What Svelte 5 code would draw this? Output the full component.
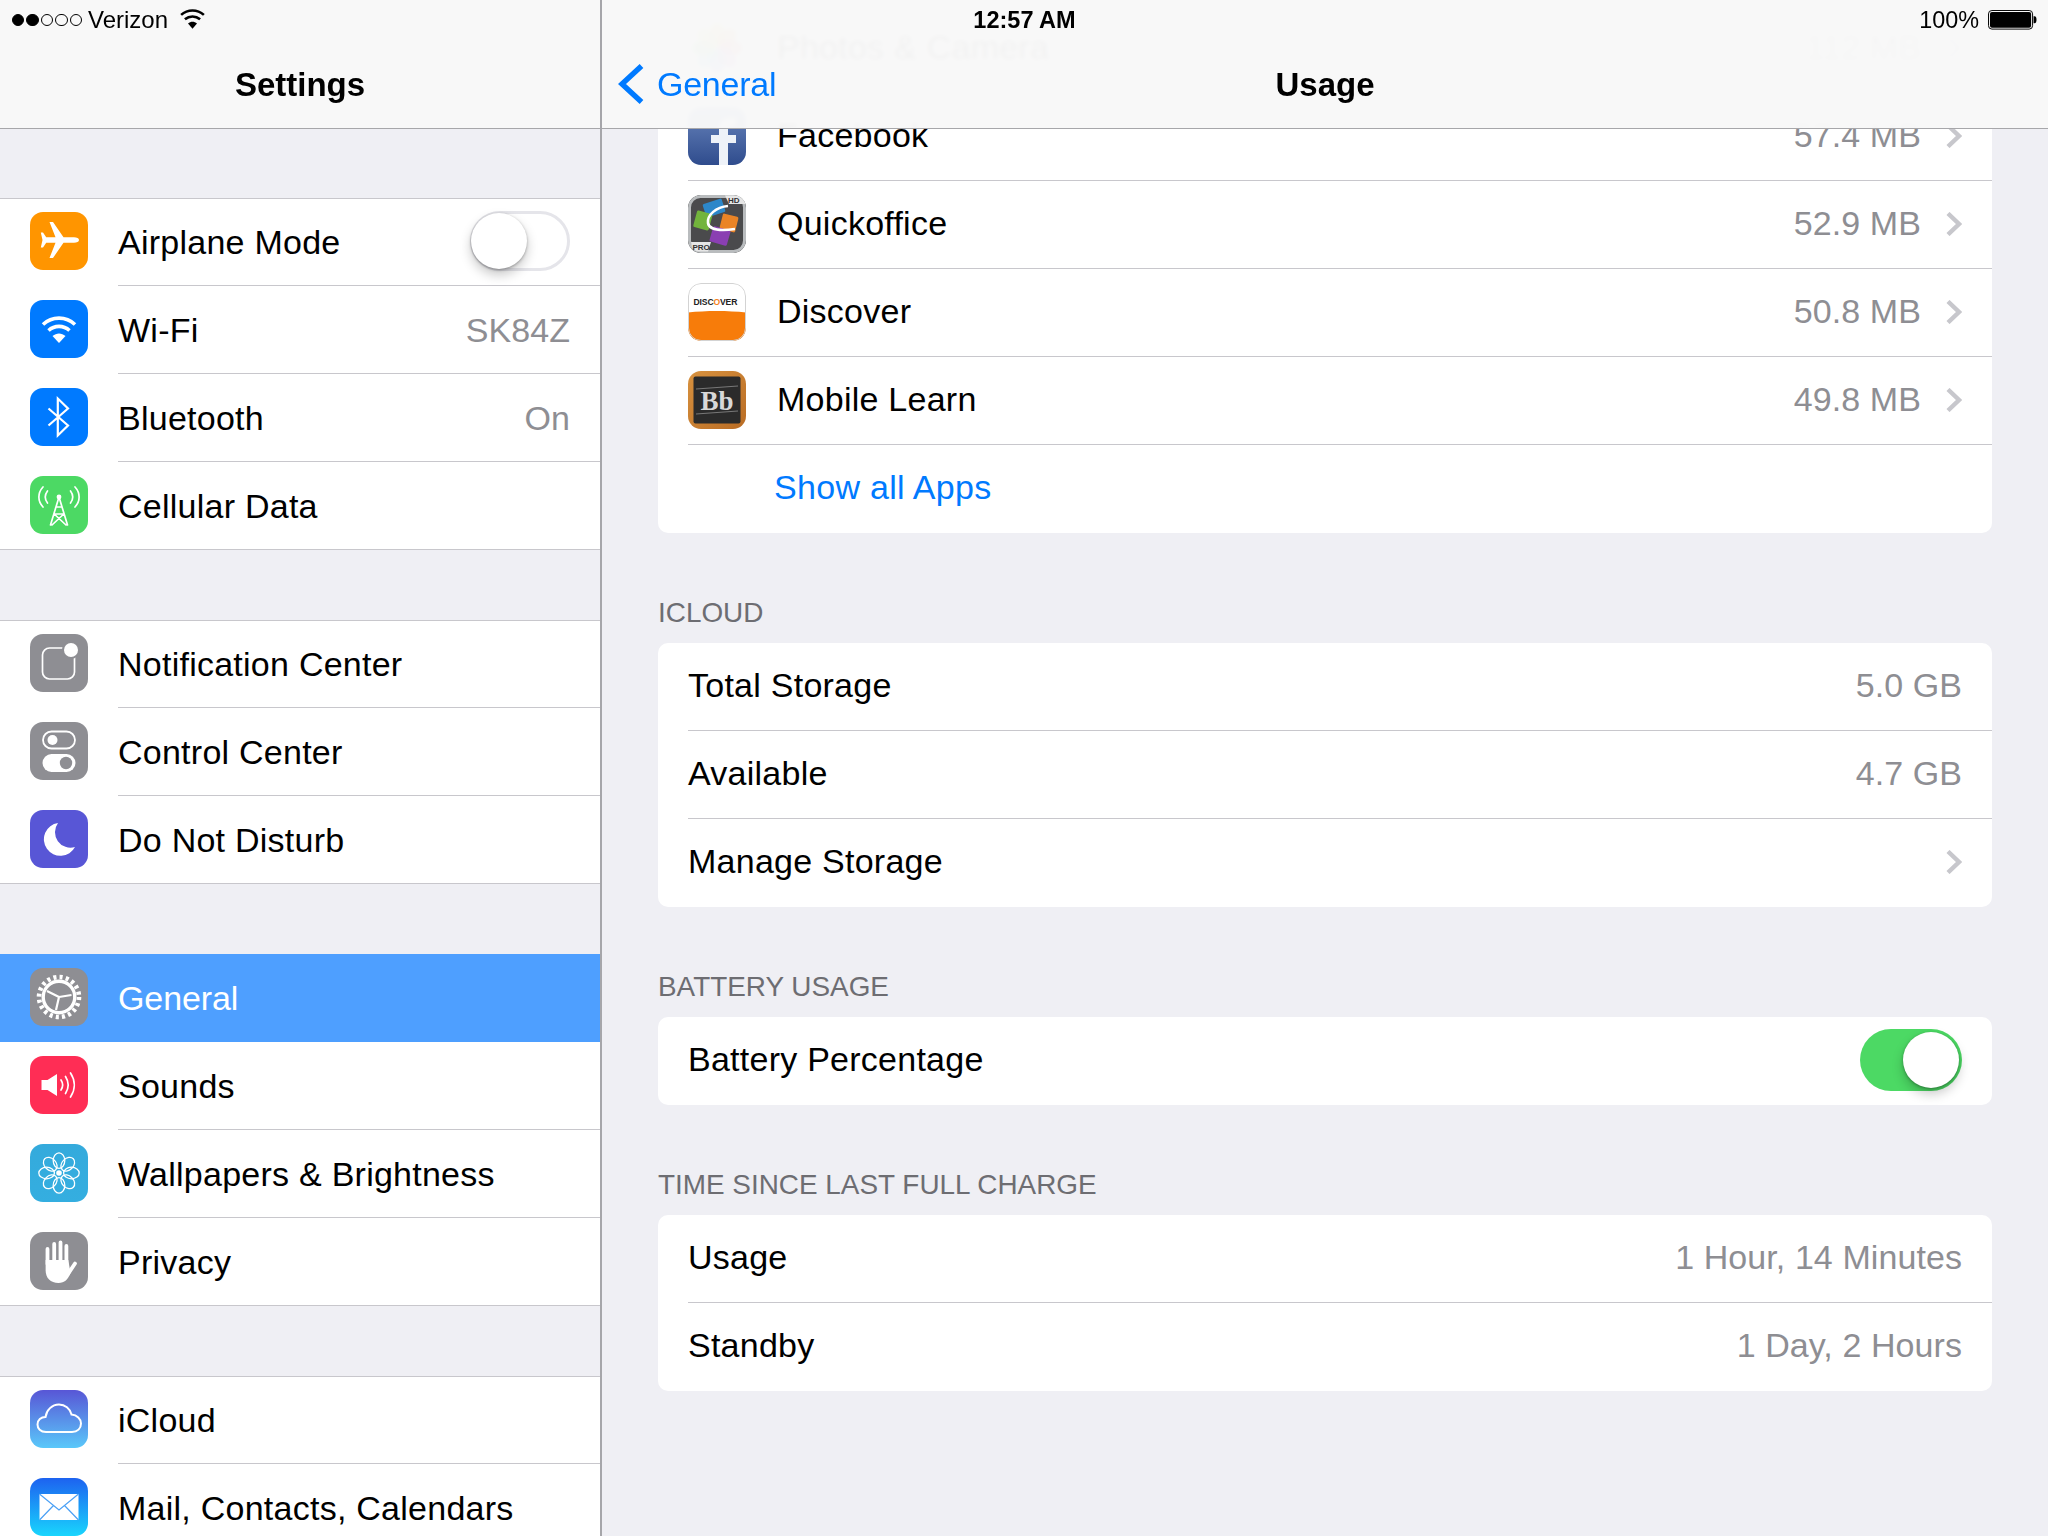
<script>
  const groups = [
    [
      { k: 'plane', bg: 'orange', label: 'Airplane Mode', toggle: 'off' },
      { k: 'wifi', bg: 'blue', label: 'Wi-Fi', value: 'SK84Z' },
      { k: 'bt', bg: 'blue', label: 'Bluetooth', value: 'On' },
      { k: 'cell', bg: 'green', label: 'Cellular Data' }
    ],
    [
      { k: 'notif', bg: 'gray', label: 'Notification Center' },
      { k: 'control', bg: 'gray', label: 'Control Center' },
      { k: 'moon', bg: 'indigo', label: 'Do Not Disturb' }
    ],
    [
      { k: 'gear', bg: 'gray', label: 'General', selected: true },
      { k: 'sound', bg: 'pink', label: 'Sounds' },
      { k: 'flower', bg: 'teal', label: 'Wallpapers & Brightness' },
      { k: 'hand', bg: 'gray', label: 'Privacy' }
    ],
    [
      { k: 'cloud', bg: 'cloudbg', label: 'iCloud' },
      { k: 'mail', bg: 'mailbg', label: 'Mail, Contacts, Calendars' }
    ]
  ];
  const apps = [
    { k: 'photos', label: 'Photos & Camera', value: '112 MB' },
    { k: 'facebook', label: 'Facebook', value: '57.4 MB' },
    { k: 'quick', label: 'Quickoffice', value: '52.9 MB' },
    { k: 'discover', label: 'Discover', value: '50.8 MB' },
    { k: 'bb', label: 'Mobile Learn', value: '49.8 MB' }
  ];
  const petals = [0, 45, 90, 135, 180, 225, 270, 315];
  const photoColors = ['#f5c33b', '#f28b2c', '#e8504c', '#b45fc0', '#6a7fd8', '#4fb6e0', '#6cc96a', '#b9d84a'];
</script>

{#snippet chevron()}
  <svg class="chev" viewBox="0 0 16 24" aria-hidden="true"><path d="M2 1.5 L13 12 L2 22.5" fill="none" stroke="#c7c7cc" stroke-width="4.4" /></svg>
{/snippet}

{#snippet toggle(state)}
  <span class="switch {state}"><span class="knob"></span></span>
{/snippet}

{#snippet glyph(k)}
  {#if k === 'plane'}
    <path fill="#fff" d="M49 28 C49 26.3 46.8 25.3 44 25.3 H33.5 L23 10 H19.5 L25.5 25.3 H16.2 L13 20.5 H10.8 L12.5 28 L10.8 35.5 H13 L16.2 30.7 H25.5 L19.5 46 H23 L33.5 30.7 H44 C46.8 30.7 49 29.7 49 28 Z" />
  {:else if k === 'wifi'}
    <path d="M29 43 L22.5 36 C26.5 32.6 31.5 32.6 35.5 36 Z" fill="#fff" />
    <path d="M18.5 30.5 C24.5 25 33.5 25 39.5 30.5" fill="none" stroke="#fff" stroke-width="3.6" />
    <path d="M13 24.5 C22 16 36 16 45 24.5" fill="none" stroke="#fff" stroke-width="3.6" />
  {:else if k === 'bt'}
    <path d="M18.5 20.5 L38 37.5 L27.8 47.5 V10.5 L38 20.5 L18.5 37.5" fill="none" stroke="#fff" stroke-width="2.2" />
  {:else if k === 'cell'}
    <g fill="none" stroke="#fff" stroke-width="1.7" stroke-linecap="round">
      <path d="M29 21 L20.5 49 M29 21 L37.5 49 M26.2 31 H31.8 M24.2 38 L36 49 M33.8 38 L22 49 M24.2 38 H33.8" />
      <path d="M13 11 C7.5 17 7.5 25 13 31 M17.5 15 C14.5 19 14.5 23 17.5 27 M45 11 C50.5 17 50.5 25 45 31 M40.5 15 C43.5 19 43.5 23 40.5 27" />
    </g>
    <circle cx="29" cy="21" r="2.4" fill="#fff" />
  {:else if k === 'notif'}
    <rect x="12.5" y="14" width="32" height="31" rx="7" fill="none" stroke="#fff" stroke-width="1.7" />
    <circle cx="41" cy="16" r="9" fill="#8e8e93" />
    <circle cx="41" cy="16" r="7" fill="#fff" />
  {:else if k === 'control'}
    <rect x="13" y="9.5" width="32" height="17" rx="8.5" fill="none" stroke="#fff" stroke-width="1.8" />
    <circle cx="22.5" cy="18" r="5" fill="#fff" />
    <rect x="12.5" y="32" width="33" height="18" rx="9" fill="#fff" />
    <circle cx="36" cy="41" r="6.2" fill="#8e8e93" />
  {:else if k === 'moon'}
    <path fill="#fff" d="M28 13 A16.5 16.5 0 1 0 45 37 A15.5 15.5 0 0 1 28 13 Z" />
  {:else if k === 'gear'}
    <circle cx="29" cy="29" r="20" fill="none" stroke="#fff" stroke-width="4.6" stroke-dasharray="3.1 3.18" />
    <circle cx="29" cy="29" r="15.8" fill="none" stroke="#fff" stroke-width="3.4" />
    <path d="M29 29 L17 23 M29 29 L41.5 27 M29 29 L26 42" fill="none" stroke="#fff" stroke-width="2.2" />
  {:else if k === 'sound'}
    <path fill="#fff" d="M11.5 24 H17.5 L27 18 V40 L17.5 34 H11.5 Z" />
    <g fill="none" stroke="#fff" stroke-width="1.7" stroke-linecap="round">
      <path d="M31 24 C33 27 33 31 31 34 M35.5 20.5 C39 26 39 32 35.5 37.5 M40.5 17 C45.5 24.5 45.5 33.5 40.5 41" />
    </g>
  {:else if k === 'flower'}
    <g fill="none" stroke="#fff" stroke-width="1.3">
      {#each petals as a}
        <ellipse cx="29" cy="16.6" rx="5.8" ry="7.8" transform="rotate({a} 29 29)" />
      {/each}
    </g>
    <circle cx="29" cy="29" r="2.8" fill="#fff" />
  {:else if k === 'hand'}
    <g fill="none" stroke="#fff" stroke-width="3.8" stroke-linecap="round">
      <path d="M17.5 17 V32 M24.2 12 V30 M30.5 10.5 V30 M36.4 14 V32 M38 42 L45 31.5" />
    </g>
    <path fill="#fff" d="M15.6 28 H38.3 L40.5 41 C38 47.5 34.5 51 28.5 51 C20.5 51 15.6 46 15.6 38 Z" />
  {:else if k === 'cloud'}
    <path fill="none" stroke="#fff" stroke-width="2" d="M16 42 C10.5 42 7.5 38.5 7.5 34.5 C7.5 30 11 27 15.5 27 C16.5 20 22 14.5 29 14.5 C35 14.5 40 18.5 41.5 24.5 C47 25 51 29 51 33.5 C51 38.5 47.5 42 42 42 Z" />
  {:else if k === 'mail'}
    <rect x="9.5" y="16" width="39" height="26" fill="#fff" />
    <path d="M9.5 16 L29 32 L48.5 16 M9.5 42 L23.5 27.5 M48.5 42 L34.5 27.5" fill="none" stroke="#4aa0f5" stroke-width="1.2" />
  {:else if k === 'photos'}
    {#each petals as a, i}
      <ellipse cx="29" cy="16" rx="8" ry="12" fill={photoColors[i]} opacity="0.8" transform="rotate({a} 29 29)" />
    {/each}
  {:else if k === 'facebook'}
    <path fill="#eef2f8" d="M31 58 V36 H23 V28 H31 V21 C31 14 36 11 42 11 H48 V19 H44 C41 19 40 20 40 23 V28 H48 V36 H40 V58 Z" />
  {:else if k === 'quick'}
    <rect x="1.5" y="1.5" width="55" height="55" rx="11" fill="none" stroke="#b9bcbe" stroke-width="3" />
    <path d="M37 0.5 H47 C53 0.5 56 3 57.5 9 H41 Z" fill="#e6e6e6" />
    <text x="40" y="8" class="tiny">HD</text>
    <path d="M3 47 H23 L20 56.5 H11 C6 56.5 3.5 53 3 47 Z" fill="#e6e6e6" />
    <text x="4.5" y="55" class="tiny">PRO</text>
    <rect x="16" y="6" width="20" height="14" rx="1.5" fill="#2c87c9" transform="rotate(-18 26 13)" />
    <rect x="7" y="17" width="16" height="17" rx="1.5" fill="#72b43c" transform="rotate(15 15 25)" />
    <rect x="33" y="20" width="16" height="16" rx="1.5" fill="#ea8426" transform="rotate(14 41 28)" />
    <rect x="23" y="33" width="18" height="16" rx="1.5" fill="#8a3fb2" transform="rotate(16 32 41)" />
    <path d="M40 11 C28 12 19 20 20 28 C21 35 32 36 47 34" fill="none" stroke="#fff" stroke-width="2.6" />
  {:else if k === 'discover'}
    <path d="M0 29.5 C18 27.5 40 27.5 58 29.5 V45 C58 53 53 58 45 58 H13 C5 58 0 53 0 45 Z" fill="#f77c0a" />
    <rect x="0.5" y="0.5" width="57" height="57" rx="12.5" fill="none" stroke="#d3d3d3" />
    <text x="5.5" y="22" class="disc">DISC<tspan fill="#f58220">O</tspan>VER</text>
  {:else if k === 'bb'}
    <rect x="5.5" y="5.5" width="47" height="47" rx="2" fill="#2b2b2b" />
    <path d="M8 18 L50 15 M8 43 L50 40" stroke="#8c8c8c" stroke-width="0.8" />
    <text x="29" y="39" text-anchor="middle" class="bbtext">Bb</text>
  {/if}
{/snippet}

{#snippet icon(k, bg)}
  <svg class="icon {bg}" viewBox="0 0 58 58" aria-hidden="true">{@render glyph(k)}</svg>
{/snippet}

<div class="screen">
  <aside class="master">
    <header class="nav"><h1>Settings</h1></header>
    {#each groups as g}
      <section class="group">
        {#each g as r}
          <div class="row" class:selected={r.selected}>
            {@render icon(r.k, r.bg)}
            <div class="cell">
              <span class="label">{r.label}</span>
              {#if r.value}<span class="value">{r.value}</span>{/if}
              {#if r.toggle}{@render toggle(r.toggle)}{/if}
            </div>
          </div>
        {/each}
      </section>
    {/each}
  </aside>

  <main class="detail">
    <header class="nav">
      <a class="back">
        <svg class="back-chev" viewBox="0 0 26 40" aria-hidden="true"><path d="M23.5 2 L4 20 L23.5 38" fill="none" stroke="#007aff" stroke-width="5.4" /></svg>
        <span>General</span>
      </a>
      <h1>Usage</h1>
    </header>

    <div class="content">
      <section class="card">
        {#each apps as a}
          <div class="crow">
            {@render icon(a.k, a.k)}
            <div class="ccell">
              <span class="label">{a.label}</span>
              <span class="value">{a.value}</span>
              {@render chevron()}
            </div>
          </div>
        {/each}
        <div class="crow"><span class="showall">Show all Apps</span></div>
      </section>

      <h2>iCloud</h2>
      <section class="card">
        <div class="crow"><div class="ccell"><span class="label">Total Storage</span><span class="value">5.0 GB</span></div></div>
        <div class="crow"><div class="ccell"><span class="label">Available</span><span class="value">4.7 GB</span></div></div>
        <div class="crow"><div class="ccell"><span class="label">Manage Storage</span>{@render chevron()}</div></div>
      </section>

      <h2>Battery Usage</h2>
      <section class="card">
        <div class="crow"><div class="ccell"><span class="label">Battery Percentage</span>{@render toggle('on')}</div></div>
      </section>

      <h2>Time Since Last Full Charge</h2>
      <section class="card">
        <div class="crow"><div class="ccell"><span class="label">Usage</span><span class="value">1 Hour, 14 Minutes</span></div></div>
        <div class="crow"><div class="ccell"><span class="label">Standby</span><span class="value">1 Day, 2 Hours</span></div></div>
      </section>
    </div>
  </main>

  <div class="status">
    <div class="st-left">
      <span class="dots"><i class="on"></i><i class="on"></i><i></i><i></i><i></i></span>
      <span>Verizon</span>
      <svg class="st-wifi" viewBox="11 15 36 29" aria-hidden="true">
        <path d="M29 43.5 L22.5 36 C26.5 32.6 31.5 32.6 35.5 36 Z" fill="#000" />
        <path d="M18 30 C24.5 24.5 33.5 24.5 40 30" fill="none" stroke="#000" stroke-width="3.8" />
        <path d="M12.5 23.5 C22 15 36 15 45.5 23.5" fill="none" stroke="#000" stroke-width="3.8" />
      </svg>
    </div>
    <div class="st-time">12:57 AM</div>
    <div class="st-right">
      <span class="pct">100%</span>
      <svg class="battery" viewBox="0 0 50 20" aria-hidden="true">
        <rect x="0.5" y="0.5" width="45" height="19" rx="3.5" fill="none" stroke="#000" />
        <rect x="2" y="2" width="42" height="16" rx="2" fill="#000" />
        <path d="M46.5 6.5 H47.5 C49 6.5 49.5 8 49.5 10 C49.5 12 49 13.5 47.5 13.5 H46.5 Z" fill="#000" />
      </svg>
    </div>
  </div>
</div>

<style>
  :global(body) { margin: 0; background: #efeff4; }
  .screen {
    position: relative;
    display: flex;
    width: 2048px;
    height: 1536px;
    overflow: hidden;
    background: #efeff4;
    color: #000;
    font-family: "Liberation Sans", Arial, sans-serif;
    font-size: 34px;
  }
  .master {
    position: relative;
    box-sizing: border-box;
    flex: 0 0 602px;
    height: 1536px;
    padding-top: 128px;
    overflow: hidden;
    border-right: 2px solid #a6a6aa;
  }
  .detail {
    position: relative;
    flex: 1;
    height: 1536px;
    overflow: hidden;
  }
  .nav {
    position: absolute;
    top: 0;
    left: 0;
    right: 0;
    z-index: 2;
    box-sizing: border-box;
    height: 129px;
    border-bottom: 1px solid #a7a7aa;
    background: rgba(248, 248, 248, 0.975);
    backdrop-filter: blur(2px);
    display: flex;
    align-items: center;
    justify-content: center;
    padding-top: 41px;
  }
  h1 {
    margin: 0;
    font-size: 33px;
    font-weight: 700;
    line-height: 40px;
  }
  .back {
    position: absolute;
    left: 16px;
    top: 64px;
    display: flex;
    align-items: center;
    gap: 13px;
    color: #007aff;
    height: 40px;
    letter-spacing: -0.25px;
  }
  .back-chev { width: 26px; height: 40px; }
  .group {
    margin-top: 70px;
    background: #fff;
    box-shadow: inset 0 1px 0 #c8c7cc, inset 0 -1px 0 #c8c7cc;
  }
  .row {
    display: flex;
    align-items: center;
    height: 88px;
    padding-left: 30px;
  }
  .row .icon { margin-bottom: 2px; }
  .cell {
    flex: 1;
    display: flex;
    align-items: center;
    justify-content: space-between;
    box-sizing: border-box;
    height: 88px;
    margin-left: 30px;
    padding-top: 1px;
    padding-right: 30px;
    border-bottom: 1px solid #c8c7cc;
  }
  .row:last-child .cell { border-bottom-color: transparent; }
  .selected { background: #4e9fff; }
  .selected .cell { border-bottom-color: transparent; }
  .selected .label { color: #fff; letter-spacing: -0.1px; }
  .icon { flex: 0 0 58px; width: 58px; height: 58px; border-radius: 13px; display: block; }
  .orange { background: #ff9500; }
  .blue { background: #007aff; }
  .green { background: #4cd964; }
  .gray { background: #8e8e93; }
  .indigo { background: #5856d6; }
  .pink { background: #ff2d55; }
  .teal { background: linear-gradient(#34aadc, #34aee0); }
  .cloudbg { background: linear-gradient(#5856d6, #5ac8fa); }
  .mailbg { background: linear-gradient(#1d62f0, #19d5fd); }
  .photos { background: #fff; }
  .facebook { background: linear-gradient(#6a86bd, #2f4c8d); }
  .quick { background: #4a4a4c; }
  .discover { background: #fff; }
  .bb { background: linear-gradient(135deg, #d8923f, #b96c24); }
  .tiny { font: 700 8px "Liberation Sans", sans-serif; fill: #333; }
  .disc { font: 700 8.6px "Liberation Sans", sans-serif; fill: #222; letter-spacing: -0.15px; }
  .bbtext { font: 700 27px "Liberation Serif", serif; fill: #d8d8d8; }
  .label { white-space: nowrap; letter-spacing: 0.25px; }
  .value { color: #8e8e93; white-space: nowrap; margin-left: auto; letter-spacing: 0.08px; }
  .content { padding: 5px 56px 0 56px; }
  .card {
    background: #fff;
    border-radius: 10px;
  }
  .crow {
    display: flex;
    align-items: center;
    height: 88px;
    padding-left: 30px;
  }
  .crow .icon { margin: 0 31px 2px 0; }
  .ccell {
    flex: 1;
    display: flex;
    align-items: center;
    box-sizing: border-box;
    height: 88px;
    padding: 0 30px 3px 0;
    border-bottom: 1px solid #c8c7cc;
  }
  .crow:last-child .ccell { border-bottom: 0; }
  .crow:has(.icon) { position: relative; }
  .crow:has(.icon) .ccell { border-bottom: 0; }
  .crow:has(.icon)::after {
    content: "";
    position: absolute;
    left: 30px;
    right: 0;
    bottom: 0;
    height: 1px;
    background: #c8c7cc;
  }
  .chev { width: 16px; height: 24px; margin-left: auto; }
  .value + .chev { margin-left: 25px; }
  .showall { color: #007aff; margin: 0 0 3px 86px; letter-spacing: 0.3px; }
  h2 {
    margin: 0;
    height: 110px;
    box-sizing: border-box;
    display: flex;
    align-items: flex-end;
    padding-bottom: 15px;
    font-size: 27.9px;
    line-height: 30px;
    font-weight: 400;
    text-transform: uppercase;
    color: #6d6d72;
  }
  .switch {
    position: relative;
    display: block;
    box-sizing: border-box;
    width: 102px;
    height: 62px;
    border-radius: 31px;
    margin-left: auto;
  }
  .switch.off { background: #fff; border: 3px solid #e5e5ea; width: 100px; height: 60px; margin-top: -3px; }
  .switch.on { background: #4cd964; }
  .knob {
    position: absolute;
    width: 56px;
    height: 56px;
    border-radius: 50%;
    background: #fff;
    box-shadow: 0 6px 12px rgba(0, 0, 0, 0.22), 0 1px 3px rgba(0, 0, 0, 0.3);
  }
  .switch.off .knob { left: -2px; top: -1px; }
  .switch.on .knob { left: 43px; top: 3px; }
  .status {
    position: absolute;
    top: 0;
    left: 0;
    right: 0;
    z-index: 3;
    height: 40px;
    display: grid;
    grid-template-columns: 1fr auto 1fr;
    align-items: center;
    padding: 0 11px 0 12px;
    font-size: 24px;
  }
  .st-left { display: flex; align-items: center; gap: 6px; }
  .st-right { display: flex; align-items: center; justify-content: flex-end; gap: 9px; }
  .st-time { font-weight: 700; font-size: 23.5px; }
  .pct { font-size: 23.4px; }
  .dots { display: flex; gap: 2px; }
  .dots i {
    display: block;
    box-sizing: border-box;
    width: 12.4px;
    height: 12.4px;
    border-radius: 50%;
    border: 1px solid #000;
  }
  .dots i.on { background: #000; }
  .st-wifi { width: 25px; height: 20px; margin-left: 6px; margin-top: -2px; }
  .battery { width: 49px; height: 19.6px; }
</style>
